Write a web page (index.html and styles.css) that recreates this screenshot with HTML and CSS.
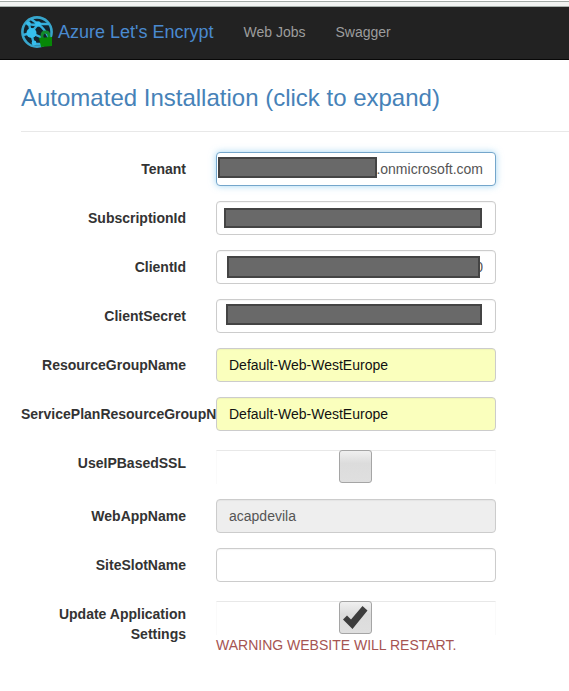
FILE: index.html
```html
<!DOCTYPE html>
<html lang="en">
<head>
<meta charset="utf-8">
<title>Azure Let's Encrypt</title>
<link rel="stylesheet" href="styles.css">
</head>
<body>
<div class="window-edge"></div>
<header class="navbar">
  <a class="brand" href="#">
    <svg class="logo" viewBox="0 0 34 34" aria-hidden="true">
      <circle cx="16" cy="17" r="14.600" fill="#14232b" stroke="#38a6cc" stroke-width="2.600"/>
      <g fill="none" stroke="#35aedb" stroke-width="2.400">
        <path d="M5 8 Q11 11 17 9 L28 9"/>
        <path d="M10 4 L17 9 Q24 14 28 23"/>
        <path d="M8 9 L10 18 L17 9"/>
        <path d="M2 20 L10 18 L22 23"/>
        <path d="M10 18 L13 29 L22 29"/>
      </g>
      <g fill="#36bfee">
        <circle cx="10.500" cy="18" r="5"/>
        <circle cx="17" cy="9" r="2.800"/>
        <circle cx="7.500" cy="8.500" r="2.200"/>
        <circle cx="13" cy="28" r="2.400"/>
      </g>
      <path d="M21 23 V21 Q21 17 24.500 17 Q28 17 28 21 V23" fill="none" stroke="#128a2c" stroke-width="2.800"/>
      <path d="M18 23 L31 22 V31 L20 32 Z" fill="#078807"/>
    </svg>
    <span>Azure Let's Encrypt</span>
  </a>
  <nav class="links">
    <a href="#">Web Jobs</a>
    <a href="#">Swagger</a>
  </nav>
</header>
<main class="page">
  <h3 class="title"><a href="#install">Automated Installation (click to expand)</a></h3>
  <hr>
  <form class="form" id="install">
    <div class="row">
      <label for="tenant">Tenant</label>
      <div class="field">
        <input class="control focused" id="tenant" type="text" value=".onmicrosoft.com">
        <span class="mask mask-tenant"></span>
      </div>
    </div>
    <div class="row">
      <label for="subscription">SubscriptionId</label>
      <div class="field">
        <input class="control" id="subscription" type="text">
        <span class="mask mask-subscription"></span>
      </div>
    </div>
    <div class="row">
      <label for="client">ClientId</label>
      <div class="field">
        <input class="control tail" id="client" type="text" value="0">
        <span class="mask mask-client"></span>
      </div>
    </div>
    <div class="row">
      <label for="secret">ClientSecret</label>
      <div class="field">
        <input class="control" id="secret" type="text">
        <span class="mask mask-secret"></span>
      </div>
    </div>
    <div class="row">
      <label for="group">ResourceGroupName</label>
      <div class="field"><input class="control filled" id="group" type="text" value="Default-Web-WestEurope"></div>
    </div>
    <div class="row">
      <label for="plan">ServicePlanResourceGroupName</label>
      <div class="field"><input class="control filled" id="plan" type="text" value="Default-Web-WestEurope"></div>
    </div>
    <div class="row">
      <label for="ipssl">UseIPBasedSSL</label>
      <div class="field">
        <div class="check"><input class="box" id="ipssl" type="checkbox"></div>
      </div>
    </div>
    <div class="row">
      <label for="webapp">WebAppName</label>
      <div class="field"><input class="control" id="webapp" type="text" value="acapdevila" readonly></div>
    </div>
    <div class="row">
      <label for="slot">SiteSlotName</label>
      <div class="field"><input class="control" id="slot" type="text"></div>
    </div>
    <div class="row">
      <label for="update">Update Application Settings</label>
      <div class="field">
        <div class="check">
          <input class="box" id="update" type="checkbox" checked>
          <svg class="tick" viewBox="0 0 33 33" aria-hidden="true"><path d="M4 18.500 L8 14.500 L12 18.500 L23.500 5 L28.500 9.500 L13.500 28 Z" fill="#3d3d3d"/></svg>
        </div>
        <span class="warning">WARNING WEBSITE WILL RESTART.</span>
      </div>
    </div>
  </form>
</main>
</body>
</html>
```
FILE: styles.css
```css
* {
  box-sizing: border-box;
}

body {
  margin: 0;
  background: #fff;
  color: #333;
  font: 14px/20px "Liberation Sans", Arial, sans-serif;
}

a {
  text-decoration: none;
}

.window-edge {
  height: 7px;
  border-top: 1px solid #fff;
  border-bottom: 1px solid #a9b2ae;
  background: #f1f3f2;
  box-shadow: inset 0 1px #a2aaa6;
}

.navbar {
  display: flex;
  align-items: center;
  height: 53px;
  padding: 0 21px 2px;
  border-bottom: 1px solid #080808;
  background: #222;
}

.brand {
  display: flex;
  align-items: center;
  gap: 3px;
  margin-right: 30px;
  color: #4a8ad0;
  font-size: 18px;
  white-space: nowrap;
}

.logo {
  width: 34px;
  height: 34px;
}

.links {
  display: flex;
  gap: 30px;
  white-space: nowrap;
}

.links a {
  color: #9d9d9d;
}

.page {
  padding: 24px 0 20px 21px;
}

.title {
  margin: 0;
  font-size: 24px;
  font-weight: 400;
  line-height: 27px;
}

.title a {
  color: #4682b8;
}

hr {
  margin: 20px 0;
  border: 0;
  border-top: 1px solid #e8e8e8;
}

.row {
  display: grid;
  grid-template-columns: 165px minmax(0, 280px);
  column-gap: 30px;
  margin-bottom: 15px;
}

label {
  padding-top: 7px;
  font-weight: 700;
  text-align: right;
}

.field {
  position: relative;
}

.control {
  display: block;
  width: 100%;
  height: 34px;
  padding: 6px 12px;
  border: 1px solid #ccc;
  border-radius: 4px;
  outline: 0;
  background: #fff;
  box-shadow: inset 0 1px 1px rgba(0, 0, 0, 0.04);
  color: #555;
  font: inherit;
}

.control.focused {
  border-color: #74a6cb;
  box-shadow: 0 0 7px rgba(102, 185, 233, 0.6);
  text-align: right;
}

.control.tail {
  text-align: right;
}

.control.filled {
  background: #faffbd;
  color: #111;
}

.control:read-only {
  background: #eee;
}

.mask {
  position: absolute;
  border: 2px solid #444;
  background: #696969;
}

.mask-tenant {
  inset: 5px 119px 8px 2px;
}

.mask-subscription {
  inset: 7px 14px 7px 8px;
}

.mask-client {
  inset: 6px 16px 6px 11px;
}

.mask-secret {
  inset: 5px 14px 8px 10px;
}

.check {
  position: relative;
  display: flex;
  justify-content: center;
  height: 34px;
  margin-top: 4px;
  padding-right: 1px;
  border: 1px solid #fafafa;
  border-top-color: #e8e8e8;
  border-bottom: 0;
}

.box {
  appearance: none;
  width: 33px;
  height: 33px;
  margin: -1px 0 0;
  border: 1px solid #a5a5a5;
  border-radius: 3px;
  background: linear-gradient(#f0f0f0, #dcdcdc 40%, #dfdfdf);
}

.tick {
  position: absolute;
  top: -1px;
  width: 33px;
  height: 33px;
  pointer-events: none;
}

.warning {
  color: #a65452;
}
```
